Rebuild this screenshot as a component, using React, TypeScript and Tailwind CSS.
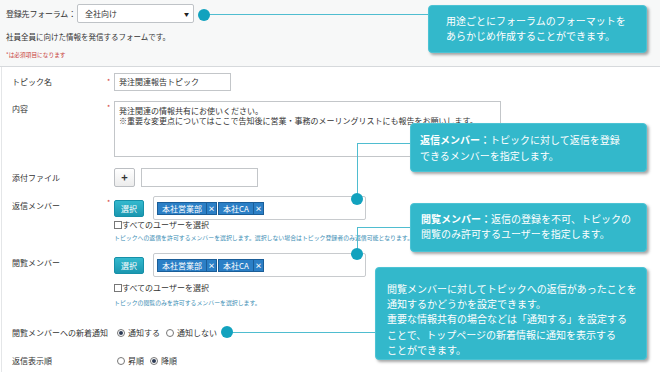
import React from "react";

const Dot = ({ x, y }: { x: number; y: number }) => (
  <div
    className="absolute w-[12px] h-[12px] rounded-full bg-[#12a2be]"
    style={{ left: x - 6, top: y - 6 }}
  />
);

const Tag = ({ label }: { label: string }) => (
  <div className="flex h-[13px] items-stretch bg-[#2b7fc6] border border-[#1b5e98] text-white text-[8px] leading-[11px]">
    <span className="px-[4px]">{label}</span>
    <span className="w-[10px] border-l border-[#1b5e98] flex items-center justify-center text-[7px] font-bold">×</span>
  </div>
);

const SelectBtn = () => (
  <div className="w-[30px] h-[17px] rounded-[2px] bg-gradient-to-b from-[#34b9ce] to-[#1a97b0] border border-[#1690a8] text-white text-[8px] leading-[15px] text-center">
    選択
  </div>
);

const Radio = ({ checked }: { checked?: boolean }) => (
  <span className="w-[8px] h-[8px] rounded-full border border-[#777] bg-white flex items-center justify-center shrink-0">
    {checked && <span className="w-[4px] h-[4px] rounded-full bg-[#2d3b55]" />}
  </span>
);

const Check = ({ label }: { label: string }) => (
  <div className="flex items-center h-[9px] text-[8px] leading-[9px]">
    <span className="w-[8px] h-[8px] border border-[#777] bg-white" />
    <span>{label}</span>
  </div>
);

const Req = () => <span className="text-[#d2342f] text-[7px] leading-[7px]">*</span>;

export default function App() {
  return (
    <div className="relative w-[660px] h-[372px] overflow-hidden bg-white text-[#333] font-['Noto_Sans_CJK_JP','Noto_Sans',sans-serif]">
      {/* top section */}
      <div className="h-[67px] bg-[#f7f8f8] border-b border-[#d6d9dc] pl-[6px] pt-[4px] flex flex-col">
        <div className="flex items-center h-[19px]">
          <span className="w-[71px] text-[8px] leading-[10px] whitespace-nowrap tracking-[-0.2px]">登録先フォーラム：</span>
          <div className="w-[117px] h-[19px] bg-white border border-[#bfc3c7] rounded-[2px] flex items-center justify-between pl-[7px] pr-[4px] text-[8px]">
            <span>全社向け</span>
            <span className="text-[5px] text-[#222]">▼</span>
          </div>
        </div>
        <div className="mt-[8px] text-[7.5px] leading-[11px]">社員全員に向けた情報を発信するフォームです。</div>
        <div className="mt-[9px] text-[5.7px] leading-[8px] text-[#c8413c]">*は必須項目になります</div>
      </div>

      {/* form */}
      <div className="ml-[1px] border-l border-[#e4e6e8] h-[305px] flex flex-col text-[8px]">
        {/* topic */}
        <div className="mt-[6px] flex h-[18px]">
          <div className="w-[105px] pl-[10px] flex items-center leading-[10px]">トピック名</div>
          <div className="w-[7px] pt-[2px]"><Req /></div>
          <div className="w-[117px] h-[18px] border border-[#c3c6c9] pl-[4px] flex items-center leading-[10px]">発注関連報告トピック</div>
        </div>
        {/* content */}
        <div className="mt-[10px] flex h-[56px]">
          <div className="w-[105px] pl-[10px] pt-[3px] leading-[10px]">内容</div>
          <div className="w-[7px]"><Req /></div>
          <div className="w-[387px] h-[56px] border border-[#c3c6c9] pl-[4px] pt-[4px] leading-[10px]">
            <div>発注関連の情報共有にお使いください。</div>
            <div className="whitespace-nowrap">※重要な変更点についてはここで告知後に営業・事務のメーリングリストにも報告をお願いします。</div>
          </div>
        </div>
        {/* attach */}
        <div className="mt-[11px] flex h-[19px]">
          <div className="w-[105px] pl-[10px] flex items-center leading-[10px]">添付ファイル</div>
          <div className="w-[7px]" />
          <div className="w-[21px] h-[19px] border border-[#bbbec2] bg-gradient-to-b from-white to-[#ececec] rounded-[2px] flex items-center justify-center text-[11px] font-bold leading-[11px]">+</div>
          <div className="ml-[6px] w-[117px] h-[19px] border border-[#c3c6c9]" />
        </div>
        {/* reply members */}
        <div className="mt-[9px] flex">
          <div className="w-[105px] pl-[10px] pt-[5px] leading-[10px]">返信メンバー</div>
          <div className="w-[7px]"><Req /></div>
          <div className="flex flex-col">
            <div className="flex items-center h-[24px]">
              <SelectBtn />
              <div className="ml-[9px] w-[213px] h-[24px] border border-[#c8cbce] rounded-[2px] flex items-center pl-[3px] gap-[1px]">
                <Tag label="本社営業部" />
                <Tag label="本社CA" />
              </div>
            </div>
            <div><Check label="すべてのユーザーを選択" /></div>
            <div className="mt-[5px] text-[5.9px] leading-[8px] text-[#3b8db4] whitespace-nowrap">トピックへの返信を許可するメンバーを選択します。選択しない場合はトピック登録者のみ返信可能となります。</div>
          </div>
        </div>
        {/* view members */}
        <div className="mt-[11px] flex">
          <div className="w-[105px] pl-[10px] pt-[5px] leading-[10px]">閲覧メンバー</div>
          <div className="w-[7px]" />
          <div className="flex flex-col">
            <div className="flex items-center h-[24px]">
              <SelectBtn />
              <div className="ml-[9px] w-[213px] h-[24px] border border-[#c8cbce] rounded-[2px] flex items-center pl-[3px] gap-[1px]">
                <Tag label="本社営業部" />
                <Tag label="本社CA" />
              </div>
            </div>
            <div className="mt-[6px]"><Check label="すべてのユーザーを選択" /></div>
            <div className="mt-[7px] text-[5.9px] leading-[8px] text-[#3b8db4] whitespace-nowrap">トピックの閲覧のみを許可するメンバーを選択します。</div>
          </div>
        </div>
        {/* notify */}
        <div className="mt-[21px] flex items-center h-[10px] leading-[10px]">
          <div className="w-[112px] pl-[10px] whitespace-nowrap">閲覧メンバーへの新着通知</div>
          <div className="flex items-center pl-[3px]">
            <Radio checked />
            <span className="ml-[3px]">通知する</span>
            <span className="ml-[6px]"><Radio /></span>
            <span className="ml-[3px]">通知しない</span>
          </div>
        </div>
        {/* order */}
        <div className="mt-[18px] flex items-center h-[10px] leading-[10px]">
          <div className="w-[112px] pl-[10px] whitespace-nowrap">返信表示順</div>
          <div className="flex items-center pl-[3px]">
            <Radio />
            <span className="ml-[3px]">昇順</span>
            <span className="ml-[6px]"><Radio checked /></span>
            <span className="ml-[3px]">降順</span>
          </div>
        </div>
      </div>

      {/* connector lines */}
      <div className="absolute left-[204px] top-[14px] w-[226px] h-[1px] bg-[#4fbdd0]" />
      <div className="absolute left-[357px] top-[143px] w-[54px] h-[1px] bg-[#4fbdd0]" />
      <div className="absolute left-[357px] top-[143px] w-[1px] h-[56px] bg-[#4fbdd0]" />
      <div className="absolute left-[357px] top-[227px] w-[54px] h-[1px] bg-[#4fbdd0]" />
      <div className="absolute left-[357px] top-[227px] w-[1px] h-[27px] bg-[#4fbdd0]" />
      <div className="absolute left-[227px] top-[332px] w-[150px] h-[1px] bg-[#4fbdd0]" />
      <Dot x={204} y={15} />
      <Dot x={357} y={199} />
      <Dot x={357} y={254} />
      <Dot x={227} y={332} />

      {/* callouts */}
      <div className="absolute left-[428px] top-[5px] w-[219px] h-[48px] rounded-[4px] bg-[#33b8cb] border border-[#4cc3d4] shadow-[2px_2px_3px_rgba(0,0,0,0.35)] text-white text-[10px] leading-[14.5px] pl-[17px] pt-[8px]">
        <div>用途ごとにフォーラムのフォーマットを</div>
        <div>あらかじめ作成することができます。</div>
      </div>
      <div className="absolute left-[410px] top-[123px] w-[237px] h-[49px] rounded-[4px] bg-[#33b8cb] border border-[#4cc3d4] shadow-[2px_2px_3px_rgba(0,0,0,0.35)] text-white text-[10px] leading-[16px] pl-[9px] pt-[8px]">
        <div><span className="font-bold">返信メンバー：</span>トピックに対して返信を登録</div>
        <div>できるメンバーを指定します。</div>
      </div>
      <div className="absolute left-[410px] top-[203px] w-[237px] h-[49px] rounded-[4px] bg-[#33b8cb] border border-[#4cc3d4] shadow-[2px_2px_3px_rgba(0,0,0,0.35)] text-white text-[10px] leading-[14.5px] pl-[10px] pt-[8px]">
        <div><span className="font-bold">閲覧メンバー：</span>返信の登録を不可、トピックの</div>
        <div>閲覧のみ許可するユーザーを指定します。</div>
      </div>
      <div className="absolute left-[375px] top-[267px] w-[272px] h-[93px] rounded-[4px] bg-[#33b8cb] border border-[#4cc3d4] shadow-[2px_2px_3px_rgba(0,0,0,0.35)] text-white text-[10px] leading-[15.2px] pl-[11px] pt-[13px]">
        <div>閲覧メンバーに対してトピックへの返信があったことを</div>
        <div>通知するかどうかを設定できます。</div>
        <div>重要な情報共有の場合などは「通知する」を設定する</div>
        <div>ことで、トップページの新着情報に通知を表示する</div>
        <div>ことができます。</div>
      </div>
    </div>
  );
}
